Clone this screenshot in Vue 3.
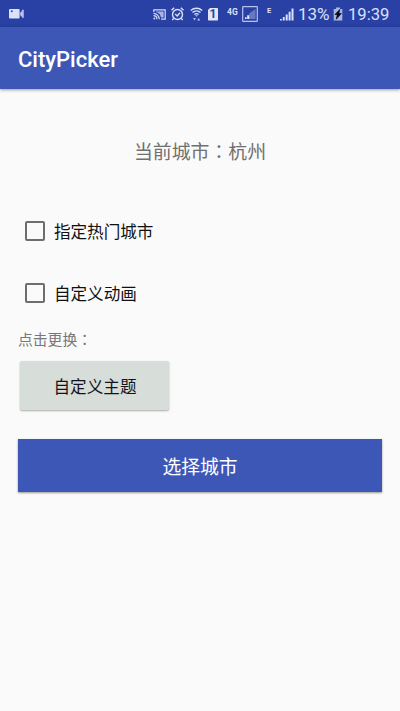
<script setup>
import { reactive } from 'vue'

const city = '杭州'
const options = reactive([
  { label: '指定热门城市', checked: false },
  { label: '自定义动画', checked: false }
])
</script>

<template>
  <div class="screen">
    <header class="status">
      <svg class="camera" width="16" height="10" viewBox="0 0 16 10">
        <rect x="0" y="0" width="10.6" height="9.4" rx="1" fill="#dde1fa" />
        <path d="M11.2 3.8 13 2V8L11.2 6z" fill="#c4cbee" />
        <path d="M13 .8h1.8v8H13z" fill="#b4bde8" />
        <circle cx="2.8" cy="2.3" r="1" fill="#3448a0" />
      </svg>
      <div class="tray">
        <svg width="13" height="11" viewBox="0 0 13 11" fill="none" stroke="#d3daf8" stroke-width="1.2">
          <path d="M.8 3V.8h11.4v9.4H8M.5 4.4c3.2 0 5.8 2.6 5.8 5.9M.5 6.7c2 0 3.5 1.6 3.5 3.6" />
          <path d="M3 2.6h7.6v5.8H8C7.5 5.6 5.7 3.6 3 3z" fill="#aab5e6" stroke="none" />
          <circle cx="1.3" cy="9.6" r="1" fill="#ccd4f6" stroke="none" />
        </svg>
        <svg class="alarm" width="13" height="14" viewBox="0 0 13 14" fill="none" stroke="#dbe1fa" stroke-width="1.4">
          <circle cx="6.5" cy="7.5" r="5" />
          <path d="M.5 3.3 3.2.8M12.5 3.3 9.800.8M2.6 11.5 1.3 13M10.4 11.500l1.300 1.500M4.200 7l2 1.900L9 5.700" />
        </svg>
        <svg class="wifi" width="13" height="14" viewBox="0 0 13 14" fill="none" stroke="#dbe1fa" stroke-width="1.4">
          <path d="M.8 3.5c3.3-3 8.1-3 11.4 0M2.5 5.5c2.3-2 5.7-2 8 0M4.4 7.5c1.2-1 3-1 4.2 0" />
          <path d="m5 8.3 1.5 1.5L8 8.3zM3 11h3l-1.5 2.5zM7.2 13.500h3L8.700 11z" fill="#b4bfeb" stroke="none" />
        </svg>
        <span class="sim">1</span>
        <span class="net">4G</span>
        <svg class="boxed" width="16" height="16" viewBox="0 0 16 16">
          <rect x=".7" y=".7" width="14.6" height="14.6" rx=".6" fill="none" stroke="#b7c1ed" stroke-width="1.2" />
          <path d="M7.200 13V7.500L13.500 3v10z" fill="#6979c0" />
          <path d="M3 13h1.700v-1.700H3zM5.200 13h2V9.300h-2z" fill="#e2e6fb" />
        </svg>
        <span class="edge">E</span>
        <svg class="signal" width="14" height="13" viewBox="0 0 14 13" fill="#dce2fb">
          <path d="M0 12.5h1.8V11H0zM2.8 12.5h1.9V9H2.8zM5.7 12.5h2V6.5h-2zM8.6 12.5h2V3.8h-2zM11.5 12.5h2V.5h-2z" />
        </svg>
        <span class="percent">13%</span>
        <svg class="battery" width="10" height="14" viewBox="0 0 10 14">
          <path d="M3 .5h4V2h2.3v11.5H.7V2H3z" fill="#a9b5df" />
          <path d="M6.8 2.5 2 7.5h2.3l-1 4.7L8.3 6.5H5.8z" fill="#050818" stroke="#050818" stroke-width=".7" />
        </svg>
        <span class="clock">19:39</span>
      </div>
    </header>
    <div class="toolbar">CityPicker</div>
    <main>
      <p class="current">当前城市<span class="colon">：</span>{{ city }}</p>
      <label v-for="option in options" :key="option.label" class="option">
        <input v-model="option.checked" type="checkbox" />
        <span>{{ option.label }}</span>
      </label>
      <p class="hint">点击更换<span class="colon">：</span></p>
      <button class="theme">自定义主题</button>
      <button class="choose">选择城市</button>
    </main>
  </div>
</template>

<style>
body { background: #fafafa; }
</style>

<style scoped>
.screen {
  height: 711px;
  background: #fafafa;
  font-family: Roboto, "Noto Sans CJK SC", sans-serif;
  overflow: hidden;
}
.status {
  height: 27px;
  box-sizing: border-box;
  padding: 1px 11px 0 9px;
  display: flex;
  align-items: center;
  justify-content: space-between;
  background: #2940a5;
  color: #dbe1fa;
}
.camera { display: block; }
.tray { display: flex; align-items: center; height: 26px; }
.tray > * { flex: none; display: block; }
.alarm { margin-left: 5px; }
.wifi { margin-left: 6px; }
.sim {
  width: 10px;
  height: 13px;
  margin-left: 5px;
  background: #e2e6fb;
  color: #2940a5;
  border-radius: 1px;
  clip-path: polygon(25% 0, 100% 0, 100% 100%, 0 100%, 0 20%);
  font-size: 12px;
  font-weight: 700;
  line-height: 13px;
  text-align: center;
}
.net { width: 11px; margin: 0 0 5px 9px; font-size: 8.5px; line-height: 8px; font-weight: 700; }
.boxed { margin-left: 4px; }
.edge { width: 5px; margin: 0 0 6px 9px; font-size: 7.5px; line-height: 8px; font-weight: 700; }
.signal { margin-left: 8px; }
.percent { width: 32px; margin-left: 4px; font-size: 17px; line-height: 24px; white-space: nowrap; }
.battery { margin-left: 3px; }
.clock { width: 41px; margin-left: 5px; padding-top: 2px; font-size: 16.6px; line-height: 24px; white-space: nowrap; }
.toolbar {
  height: 62px;
  box-sizing: border-box;
  padding: 2px 18px 0;
  display: flex;
  align-items: center;
  background: #3d57b7;
  color: #fff;
  font-size: 22px;
  font-weight: 500;
  box-shadow: 0 1px 3px rgba(0, 0, 0, .38);
}
main {
  padding: 45px 18px 0;
  display: flex;
  flex-direction: column;
}
p { margin: 0; }
.colon { font-family: "Noto Sans CJK TC", sans-serif; }
.current {
  height: 34px;
  margin-bottom: 32px;
  line-height: 34px;
  text-align: center;
  font-size: 18.9px;
  color: #707070;
}
.option {
  height: 62px;
  display: flex;
  align-items: center;
  font-size: 16.6px;
  color: #111;
}
.option input {
  appearance: none;
  width: 20px;
  height: 20px;
  margin: 0 8.5px 0 7.4px;
  box-sizing: border-box;
  border: 2px solid #6d6d6d;
  border-radius: 2px;
}
.option input:checked { background: #3d57b7; }
.hint { height: 30px; line-height: 30px; font-size: 14.8px; color: #777; }
button {
  padding: 0;
  border: 0;
  font-family: inherit;
}
.theme {
  width: 149px;
  height: 49px;
  margin: 7px 0 0 2px;
  padding-left: 1px;
  background: #d7ddd8;
  border-radius: 2px;
  box-shadow: 0 1px 2px rgba(0, 0, 0, .32);
  color: #14141c;
  font-size: 16.6px;
}
.choose {
  height: 53px;
  margin-top: 29px;
  background: #3d57b7;
  box-shadow: 0 1px 2px rgba(0, 0, 0, .4);
  color: #fff;
  font-size: 18.8px;
}
</style>
